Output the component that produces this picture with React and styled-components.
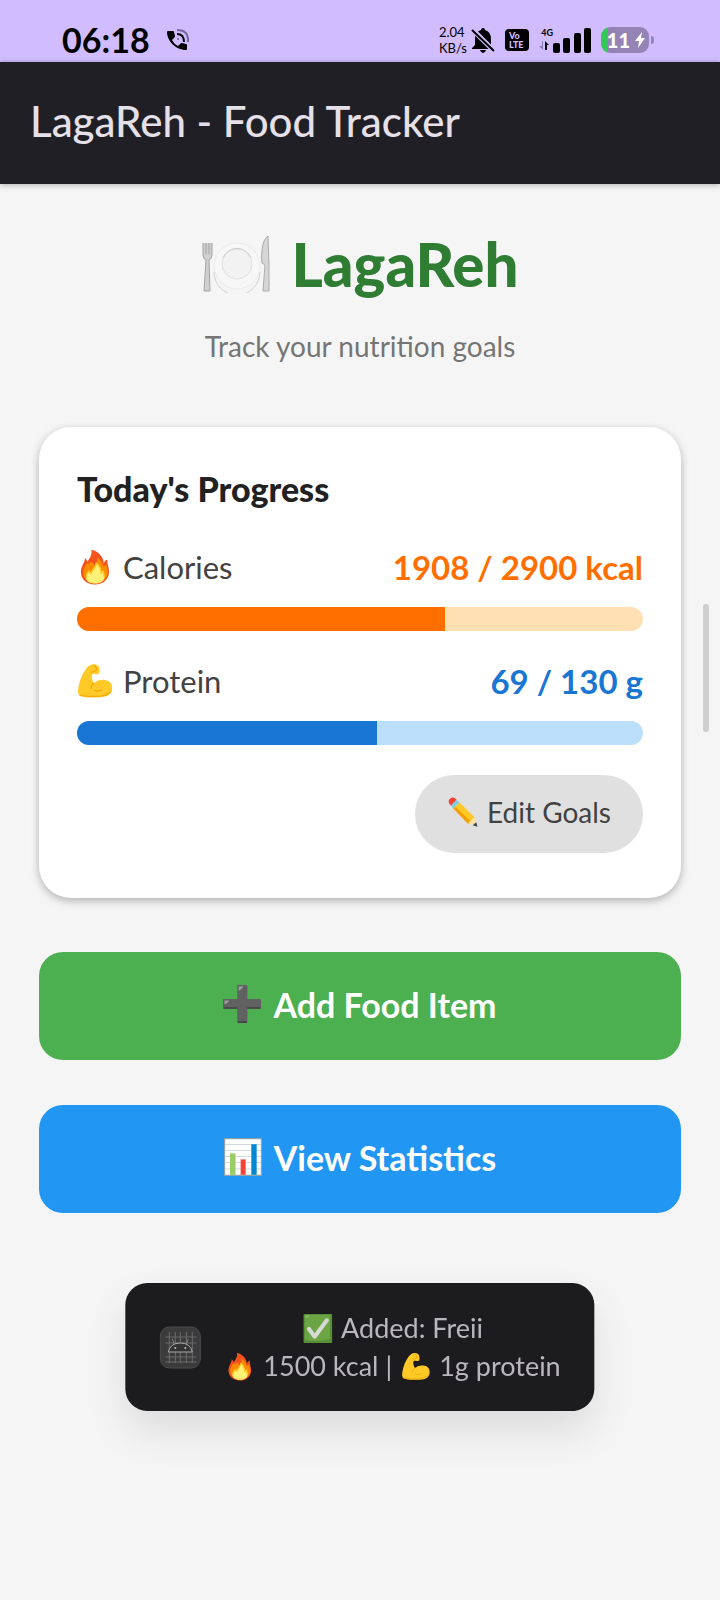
import React, { useState } from 'react'
import styled, { createGlobalStyle } from 'styled-components'

const goals = [
    { id: 'calories', name: 'Calories', icon: 'fire', eaten: 1908, target: 2900, unit: 'kcal', color: '#ff6f00', track: '#ffe0b2' },
    { id: 'protein', name: 'Protein', icon: 'muscle', eaten: 69, target: 130, unit: 'g', color: '#1976d2', track: '#bbdefb' },
]

const drawings = {
    fire: (
        <>
            <path fill="#f4511e" d="M51 3c4 17-5 29-14 42-2-6-5-10-9-13 1 16-14 27-14 50 0 26 21 44 49 44 30 0 51-18 51-46 0-16-8-27-6-43-8 3-12 9-13 17C96 31 78 9 51 3z" />
            <path fill="#fb8c00" d="M45 48c-3 6-6 7-9 3-6 10-14 17-14 31 0 24 18 40 42 40s46-16 46-40c0-10-4-18-5-27-3 4-7 6-11 6-4-14-12-24-22-32 2 14-2 22-8 30-6-8-10-14-19-11z" />
            <path fill="#fff176" d="M67 47c3 17-14 24-19 39-3-2-5-5-6-9-7 9-11 15-10 26 2 13 15 20 33 20 19 0 33-9 33-24 0-9-4-14-3-22-5 2-8 5-9 10-1-15-7-29-19-40z" />
            <path fill="none" stroke="#ffca28" strokeWidth="5" strokeLinejoin="round" d="M68 49c1 18-13 23-19 38-3-2-5-5-6-9-7 9-11 15-10 25M69 49c11 11 17 25 17 38 2-4 5-7 8-8-1 7 3 13 3 21" />
        </>
    ),
    muscle: (
        <>
            <path fill="#ffca28" d="M46 8c8-6 22-5 29 2 5 5 6 17 5 23-1 7-9 8-15 6-6-1-10-1-12 3-2 8 2 20 7 29 12-10 28-13 43-10 14 3 23 14 22 29-1 19-15 31-43 32-30 1-55 2-72-6C2 112 3 97 6 82c4-22 12-42 25-60 4-6 9-10 15-14z" />
            <path fill="none" stroke="#f4a800" strokeWidth="4" strokeLinecap="round" d="M61 9c6 5 10 12 7 17-4 5-9 3-15 6M59 72c-7 5-10 11-9 18M62 97c9 5 18 3 25-2M10 114c20 7 47 5 71 4 18-1 33-6 40-18" />
        </>
    ),
    pencil: (
        <>
            <path fill="#f44336" d="M7 25C4 17 14 5 24 6c6 1 12 6 16 11L17 39C12 35 9 31 7 25z" />
            <path fill="#82cfe0" d="M38 15l13 11-25 25-11-13z" />
            <path fill="#ffca28" d="M50 26l61 60-15 18-70-54z" />
            <path fill="#f59f00" d="M26 51l8-8 63 60-11 10z" />
            <path fill="#ffe0a3" d="M112 86l9 35-36-12c2-7 7-8 11-8 1-7 6-14 16-15z" />
            <path fill="#37474f" d="M117 105l5 18-19-6z" />
        </>
    ),
    plus: (
        <>
            <path fill="#616161" d="M48 4q0-4 4-4h26q4 0 4 4v43h42q4 0 4 4v25q0 4-4 4H82v44q0 4-4 4H52q-4 0-4-4V80H4q-4 0-4-4V51q0-4 4-4h44z" />
            <path fill="#424242" d="M50 122h30v6H50zM2 75h46v5H2zM82 75h44v5H82z" />
            <path fill="#9e9e9e" d="M53 5h16q-4 8-16 14zM5 52h17q-5 8-17 13z" />
        </>
    ),
    chart: (
        <>
            <path fill="#90a4ae" d="M0 0h128v128H0z" />
            <path fill="#fff" d="M4 4h120v120H4z" />
            <path stroke="#b0bec5" strokeWidth="2" d="M4 22h120M4 42h120M4 62h120M4 83h120M4 104h120" />
            <path fill="#9ccc65" d="M20 52h19v72H20z" />
            <path fill="#f44336" d="M56 72h17v52H56z" />
            <path fill="#0288d1" d="M92 21h18v103H92z" />
        </>
    ),
    check: (
        <>
            <rect width="128" height="128" rx="6" fill="#568f35" />
            <path fill="#6ca543" d="M7 4h111v106q-66 17-111 4z" />
            <path fill="#91bc6f" d="M10 7h22q-9 8-22 11z" />
            <path fill="none" stroke="#d7d9d6" strokeWidth="18" strokeLinecap="round" strokeLinejoin="round" d="M25 66l25 34 54-72" />
        </>
    ),
}

function Emoji({ name, size }) {
    return <Glyph viewBox="0 0 128 128" $size={size} aria-hidden="true">{drawings[name]}</Glyph>
}

function PlateIcon() {
    return (
        <Plate viewBox="0 0 70 58" aria-hidden="true">
            <circle cx="36" cy="31" r="23" fill="#f7f7f7" stroke="#ebebeb" />
            <path d="M13 37a23 23 0 0 0 46 0" fill="none" stroke="#d2d2d2" />
            <circle cx="36" cy="29" r="15" fill="#f2f2f2" stroke="#e0e0e0" />
            <path d="M22 23a15 15 0 0 1 28 0" fill="none" stroke="#cfcfcf" />
            <path d="M2 8v12q0 4 3 5L3 56h6L8 25q3-1 3-5V8M5 8v11M8 8v11" fill="#cfcfcf" stroke="#a3a3a3" />
            <path d="M67 1q-5 3-6 15-1 6 0 12l3 2-2 26h6V30z" fill="#d6d6d6" stroke="#ababab" />
        </Plate>
    )
}

function CallIcon() {
    return (
        <Drawing viewBox="0 0 24 24" $w={24} $h={24} aria-hidden="true">
            <path d="M2 3h5q1 0 1 1l1 4q0 1-1 2l-2 2q2 4 6 6l2-2q1-1 2-1l4 1q1 0 1 1v4q0 1-1 1C10 22 1 13 1 4q0-1 1-1z" />
            <path d="M11 6q7 0 7 8" fill="none" stroke="#000" strokeWidth="2" />
            <path d="M11 2q12 0 11 12" fill="none" stroke="#79669e" strokeWidth="2" />
            <circle cx="12" cy="11" r="1" fill="#79669e" />
        </Drawing>
    )
}

function MutedBellIcon() {
    return (
        <Drawing viewBox="0 0 24 26" $w={24} $h={26} aria-hidden="true">
            <path d="M12 1q2 0 2 2 6 2 6 9v6l2 3v1H1v-1l3-3v-6q0-7 6-9 0-2 2-2zM9 23h6q-1 3-3 3t-3-3z" />
            <path d="M1 2l22 22" stroke="#d0bcff" strokeWidth="5" />
            <path d="M1 3l22 21" stroke="#000" strokeWidth="2" />
        </Drawing>
    )
}

function SignalIcon() {
    return (
        <Drawing viewBox="0 0 38 26" $w={38} $h={26} aria-hidden="true">
            <rect x="0" y="16" width="7" height="10" rx="2" />
            <rect x="10" y="11" width="7" height="15" rx="2" />
            <rect x="21" y="6" width="7" height="20" rx="2" />
            <rect x="31" y="1" width="7" height="25" rx="2" />
        </Drawing>
    )
}

function AppTileIcon() {
    return (
        <Drawing viewBox="0 0 42 43" $w={42} $h={43} aria-hidden="true">
            <rect x="1" y="1" width="40" height="41" rx="9" fill="#3b3b3c" stroke="#4c4c4d" />
            <path d="M10 6v31M16 6v31M21 6v31M27 6v31M33 6v31M6 11h31M6 17h31M6 31h31M6 36h31" stroke="#6b6b6c" fill="none" />
            <path d="M9 26q2-9 12-9t12 9z" fill="#343435" stroke="#aaa" />
            <path d="M15 18l-2-5M27 18l2-5" stroke="#888" />
            <circle cx="16" cy="22" r="1" fill="#bbb" />
            <circle cx="26" cy="22" r="1" fill="#bbb" />
        </Drawing>
    )
}

function StatusBar() {
    return (
        <Status>
            <Clock>06:18</Clock>
            <CallIcon />
            <StatusRight>
                <Speed><span>2.04</span><span>KB/s</span></Speed>
                <MutedBellIcon />
                <Volte><span>Vo</span><span>LTE</span></Volte>
                <Network>
                    <NetworkType>
                        <span>4G</span>
                        <Drawing viewBox="0 0 10 9" $w={10} $h={9} aria-hidden="true">
                            <path d="M4 0v9L0 5h3V0z" fill="#8f7bb5" />
                            <path d="M6 9V0l4 4H8v5z" />
                        </Drawing>
                    </NetworkType>
                    <SignalIcon />
                </Network>
                <BatteryWrap>
                    <Battery>
                        11
                        <Drawing viewBox="0 0 10 16" $w={10} $h={16} aria-hidden="true">
                            <path fill="#fff" d="M7 0L0 9h4l-1 7 7-10H6z" />
                        </Drawing>
                    </Battery>
                    <BatteryTip />
                </BatteryWrap>
            </StatusRight>
        </Status>
    )
}

function Goal({ goal }) {
    const percent = Math.floor(goal.eaten * 100 / goal.target)
    const fill = percent + '%'

    return (
        <GoalBlock>
            <GoalRow>
                <GoalName id={goal.id}><Emoji name={goal.icon} size={36} />{goal.name}</GoalName>
                <GoalValue $color={goal.color}>{goal.eaten} / {goal.target} {goal.unit}</GoalValue>
            </GoalRow>
            <Track $color={goal.track} role="progressbar" aria-labelledby={goal.id} aria-valuenow={percent}>
                <Fill $color={goal.color} style={{ width: fill }} />
            </Track>
        </GoalBlock>
    )
}

export default function App() {
    const [added] = useState({ name: 'Freii', kcal: 1500, protein: 1 })

    return (
        <Page>
            <GlobalStyle />
            <StatusBar />
            <AppBar>LagaReh - Food Tracker</AppBar>
            <Content>
                <Brand><PlateIcon />LagaReh</Brand>
                <Tagline>Track your nutrition goals</Tagline>

                <Card>
                    <CardTitle>Today's Progress</CardTitle>
                    {goals.map((goal) => <Goal key={goal.id} goal={goal} />)}
                    <EditButton type="button"><Emoji name="pencil" size={32} />Edit Goals</EditButton>
                </Card>

                <Actions>
                    <ActionButton type="button" $color="#4caf50"><Emoji name="plus" size={38} />Add Food Item</ActionButton>
                    <ActionButton type="button" $color="#2196f3"><Emoji name="chart" size={38} />View Statistics</ActionButton>
                </Actions>
            </Content>

            <ScrollThumb />
            <Toast role="status">
                <AppTileIcon />
                <ToastText>
                    <ToastLine><Emoji name="check" size={29} />Added: {added.name}</ToastLine>
                    <ToastLine>
                        <Emoji name="fire" size={29} />
                        <span>{added.kcal} kcal |</span>
                        <Emoji name="muscle" size={29} />
                        <span>{added.protein}g protein</span>
                    </ToastLine>
                </ToastText>
            </Toast>
        </Page>
    )
}


const GlobalStyle = createGlobalStyle`
    *{
        box-sizing:border-box;
    }

    body{
        margin:0;
        background-color:#f5f5f5;
        font-family:Lato, "Open Sans", sans-serif;
    }

    button{
        border:none;
        font-family:inherit;
        cursor:pointer;
    }
`;

const Page = styled.div`
    position:relative;
    min-height:100vh;
`;

const Drawing = styled.svg`
    display:block;
    flex:none;
    width:${(p) => p.$w}px;
    height:${(p) => p.$h}px;
`;

const Glyph = styled.svg`
    display:block;
    flex:none;
    width:${(p) => p.$size}px;
    height:${(p) => p.$size}px;
`;

const Status = styled.div`
    display:flex;
    align-items:center;
    gap:16px;
    height:62px;
    padding:18px 66px 0 62px;
    background-color:#d0bcff;
    color:#000;
`;

const Clock = styled.time`
    font-size:34px;
    line-height:40px;
    font-weight:700;
`;

const StatusRight = styled.div`
    display:flex;
    align-items:center;
    gap:10px;
    margin-left:auto;
`;

const Speed = styled.div`
    display:flex;
    flex-direction:column;
    margin-right:-6px;
    font-size:13px;
    line-height:16px;
`;

const Volte = styled.div`
    display:flex;
    flex-direction:column;
    width:24px;
    height:22px;
    padding:2px 4px;
    border-radius:4px;
    background-color:#000;
    color:#d0bcff;
    font-size:9px;
    line-height:9px;
    font-weight:900;
`;

const Network = styled.div`
    display:flex;
    align-items:flex-end;
`;

const NetworkType = styled.div`
    display:flex;
    flex-direction:column;
    gap:3px;
    width:14px;
    padding-bottom:3px;
    font-size:9px;
    line-height:10px;
    font-weight:700;

    span{
        align-self:flex-end;
    }
`;

const BatteryWrap = styled.div`
    display:flex;
    align-items:center;
    gap:2px;
`;

const Battery = styled.div`
    display:flex;
    align-items:center;
    justify-content:flex-end;
    gap:5px;
    width:48px;
    height:26px;
    padding-right:4px;
    border-radius:9px;
    background:linear-gradient(to right, #34c759 7px, #9483b5 7px);
    color:#fff;
    font-size:20px;
    font-weight:900;
`;

const BatteryTip = styled.div`
    width:3px;
    height:8px;
    border-radius:0 3px 3px 0;
    background-color:#9483b5;
`;

const AppBar = styled.header`
    display:flex;
    align-items:center;
    height:122px;
    padding:0 30px 4px;
    background-color:#211f26;
    box-shadow:0 1px 6px rgba(0, 0, 0, 0.3);
    color:#e6e0e9;
    font-size:42px;
    font-weight:500;
`;

const Content = styled.main`
    display:flex;
    flex-direction:column;
    padding:44px 39px;
`;

const Brand = styled.h1`
    display:flex;
    align-items:center;
    justify-content:center;
    gap:20px;
    margin:0;
    color:#2e7d32;
    font-size:60px;
    line-height:72px;
    font-weight:900;
`;

const Plate = styled.svg`
    display:block;
    width:70px;
    height:58px;
`;

const Tagline = styled.p`
    margin:28px 0 63px;
    color:#757575;
    font-size:28px;
    line-height:36px;
    text-align:center;
`;

const Card = styled.section`
    display:flex;
    flex-direction:column;
    padding:38px 38px 45px;
    border-radius:32px;
    background-color:#fff;
    box-shadow:0 3px 8px rgba(0, 0, 0, 0.28);
`;

const CardTitle = styled.h2`
    margin:0 0 30px;
    color:#212121;
    font-size:34px;
    line-height:48px;
    font-weight:900;
`;

const GoalBlock = styled.div`
    margin-bottom:26px;
`;

const GoalRow = styled.div`
    display:flex;
    align-items:center;
    justify-content:space-between;
    height:48px;
    margin-bottom:16px;
`;

const GoalName = styled.span`
    display:flex;
    align-items:center;
    gap:10px;
    color:#424242;
    font-size:31px;
`;

const GoalValue = styled.span`
    color:${(p) => p.$color};
    font-size:33px;
    font-weight:700;
`;

const Track = styled.div`
    height:24px;
    border-radius:12px;
    overflow:hidden;
    background-color:${(p) => p.$color};
`;

const Fill = styled.div`
    height:100%;
    background-color:${(p) => p.$color};
`;

const EditButton = styled.button`
    display:flex;
    align-items:center;
    align-self:flex-end;
    gap:8px;
    height:78px;
    margin-top:4px;
    padding:0 32px 4px;
    border-radius:39px;
    background-color:#e0e0e0;
    color:#424242;
    font-size:28px;
`;

const Actions = styled.div`
    display:flex;
    flex-direction:column;
    gap:45px;
    margin-top:54px;
`;

const ActionButton = styled.button`
    display:flex;
    align-items:center;
    justify-content:center;
    gap:12px;
    height:108px;
    padding:0 32px 4px;
    border-radius:24px;
    background-color:${(p) => p.$color};
    color:#fff;
    font-size:34px;
    font-weight:700;
`;

const ScrollThumb = styled.div`
    position:absolute;
    top:604px;
    right:11px;
    width:6px;
    height:128px;
    border-radius:3px;
    background-color:#cfcfcf;
`;

const Toast = styled.div`
    position:fixed;
    bottom:189px;
    left:50%;
    transform:translateX(-50%);
    display:flex;
    align-items:center;
    gap:24px;
    height:128px;
    padding:0 34px;
    border-radius:22px;
    background-color:#1c1c1e;
    box-shadow:0 20px 40px rgba(0, 0, 0, 0.1);
    color:#bab7bc;
    font-size:27px;
    line-height:38px;
    white-space:nowrap;
`;

const ToastText = styled.div`
    display:flex;
    flex-direction:column;
    align-items:center;
`;

const ToastLine = styled.div`
    display:flex;
    align-items:center;
    gap:9px;
`;
